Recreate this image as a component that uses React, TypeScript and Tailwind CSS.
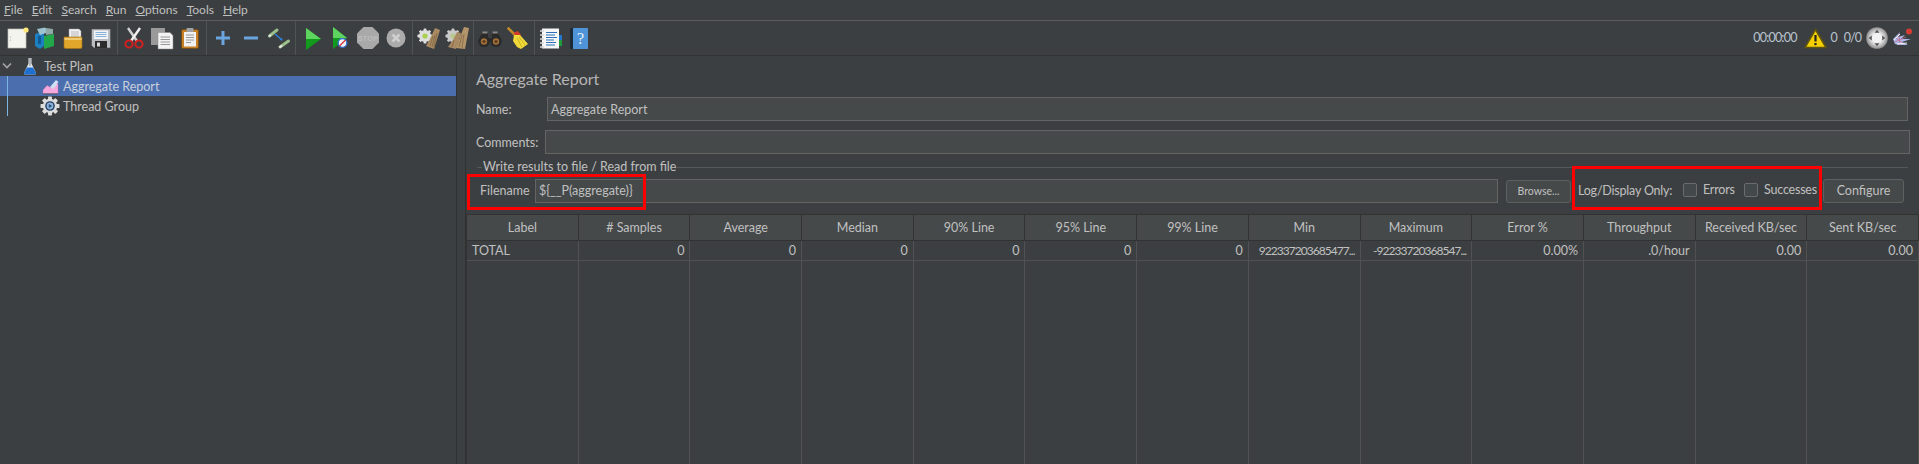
import React from "react";

function Sep() {
  return <div className="w-px h-[34px] bg-[#505354] mx-[2px] self-center shrink-0" />;
}

function Btn({ children }: { children: React.ReactNode }) {
  return <div className="w-[28px] h-[34px] shrink-0 flex items-center justify-center">{children}</div>;
}

const I = ({ children, w = 24, h = 24 }: { children: React.ReactNode; w?: number; h?: number }) => (
  <svg width={w} height={h} viewBox={`0 0 ${w} ${h}`} className="block">{children}</svg>
);

const NewDoc = () => (
  <I>
    <rect x="3" y="3" width="18" height="19" fill="#f4f4ee" stroke="#bdbdb5" strokeWidth="0.7" />
    <circle cx="21" cy="4" r="2.6" fill="#ffe97a" />
    <circle cx="5.5" cy="11" r="0.6" fill="#999" />
    <circle cx="5.5" cy="14" r="0.6" fill="#999" />
  </I>
);
const Template = () => (
  <I>
    <path d="M2 8 L11 5 V20 L7 23 L2 20Z" fill="#1c7fc0" />
    <path d="M11 10 L21 8 V20 L11 23Z" fill="#22a84a" />
    <path d="M4 3 L12 1.5 L16 6 L7 9Z" fill="#9cc3cf" />
    <path d="M13 2 L20 3 L20 8 L13 9Z" fill="#8fa9a6" />
    <rect x="5" y="10" width="3" height="8" fill="#0f5a94" />
  </I>
);
const OpenIcon = () => (
  <I>
    <path d="M8 3 H18 L20 5 V14 H8Z" fill="#f2f2f2" stroke="#999" strokeWidth="0.5" />
    <path d="M10 6 H18 M10 8 H18 M10 10 H18" stroke="#aaa" strokeWidth="0.8" />
    <path d="M3 11 H21 V21 Q21 22.5 19 22.5 H5 Q3 22.5 3 21Z" fill="#e0a52b" stroke="#a67414" strokeWidth="0.6" />
    <path d="M3.5 13 H20.5" stroke="#f6d98a" strokeWidth="1.5" />
  </I>
);
const Save = () => (
  <I>
    <path d="M2.5 3 H21.5 V22 H5 L2.5 19.5Z" fill="#b9bcc1" stroke="#4c4c4c" strokeWidth="0.6" />
    <rect x="5" y="4.5" width="14" height="8.5" fill="#f2f5f8" />
    <path d="M6.5 6.5 H17.5 M6.5 8.5 H17.5 M6.5 10.5 H17.5" stroke="#6f9fce" strokeWidth="0.8" />
    <rect x="6" y="15" width="12" height="7" fill="#2b2b2b" />
    <rect x="8" y="16.5" width="3" height="4" fill="#d8d8d8" />
  </I>
);
const Cut = () => (
  <I>
    <path d="M6 2 L15 15" stroke="#d3d3d3" strokeWidth="2.4" />
    <path d="M18 2 L9 15" stroke="#f0f0f0" strokeWidth="2.4" />
    <circle cx="7" cy="18" r="3.6" fill="none" stroke="#d21f1f" strokeWidth="2" />
    <circle cx="17" cy="18" r="3.6" fill="none" stroke="#d21f1f" strokeWidth="2" />
  </I>
);
const Copy = () => (
  <I>
    <rect x="1" y="2" width="14" height="17" fill="#9a9a9a" />
    <path d="M8 6.5 H20 L23 9.5 V23 H8Z" fill="#f3f3f3" stroke="#8a8a8a" strokeWidth="0.5" />
    <path d="M10.5 11 H20 M10.5 13.5 H20 M10.5 16 H20 M10.5 18.5 H20" stroke="#8d8d8d" strokeWidth="0.9" />
  </I>
);
const Paste = () => (
  <I>
    <rect x="3.5" y="3.5" width="17" height="19" rx="1.5" fill="#c57f24" stroke="#6d4611" strokeWidth="0.7" />
    <rect x="6" y="6" width="12" height="14.5" fill="#f1f1f1" />
    <rect x="8.5" y="2" width="7" height="4" rx="0.8" fill="#9ea3a8" />
    <path d="M8 9 H16 M8 11.5 H16 M8 14 H16 M8 16.5 H13" stroke="#8f8f8f" strokeWidth="0.9" />
  </I>
);
const Plus = () => (
  <I>
    <path d="M12 5 V19 M5 12 H19" stroke="#6ba5e0" strokeWidth="3" />
  </I>
);
const Minus = () => (
  <I>
    <path d="M5 12 H19" stroke="#6ba5e0" strokeWidth="3" />
  </I>
);
const Toggle = () => (
  <I>
    <path d="M2.5 10 L10 4" stroke="#9abf8b" strokeWidth="3" strokeLinecap="round" />
    <path d="M13 21 L21.5 15" stroke="#9abf8b" strokeWidth="3" strokeLinecap="round" />
    <path d="M2 10.5 L4 9" stroke="#e8e8e8" strokeWidth="2" />
    <path d="M12.5 21.5 L15 19.5" stroke="#e8e8e8" strokeWidth="2" />
    <path d="M8 8 L15 14" stroke="#2f7fd8" strokeWidth="1.4" />
    <path d="M15.5 14.5 L12.5 14 L15 11.5Z" fill="#2f7fd8" />
  </I>
);
const Play = () => (
  <I>
    <path d="M6 2 L21 13 L6 24Z" fill="#119a1c" />
    <path d="M6 2 L21 13 L6 13Z" fill="#5fd35f" />
  </I>
);
const PlayNoTimer = () => (
  <I>
    <path d="M5 1 L19 12 L5 23Z" fill="#119a1c" />
    <path d="M5 1 L19 12 L5 12Z" fill="#5fd35f" />
    <circle cx="14.5" cy="17" r="4.4" fill="#f2f6ff" stroke="#2d6fd0" strokeWidth="1.4" />
    <path d="M11.5 20 L17.5 14" stroke="#d93a3a" strokeWidth="1.4" />
  </I>
);
const Stop = () => (
  <svg width="24" height="24" viewBox="0 0 24 24" className="block">
    <path d="M7.5 1 H16.5 L23 7.5 V16.5 L16.5 23 H7.5 L1 16.5 V7.5Z" fill="#a9a9a9" />
    <text x="12" y="14.5" textAnchor="middle" fontSize="7.5" fontWeight="700" fill="#bdbdbd" fontFamily="'Liberation Sans', sans-serif">STOP</text>
  </svg>
);
const Shutdown = () => (
  <I>
    <circle cx="12" cy="12" r="9.5" fill="#ababab" />
    <path d="M8.5 8.5 L15.5 15.5 M15.5 8.5 L8.5 15.5" stroke="#cfcfcf" strokeWidth="2.6" />
  </I>
);
const GearSmall = ({ fill = "#dedede", dot = "#a8cf4f" }: { fill?: string; dot?: string }) => (
  <g>
    <g fill={fill}>
      <circle cx="8" cy="10" r="6" />
      <rect x="6.6" y="2.5" width="2.8" height="15" rx="0.6" />
      <rect x="6.6" y="2.5" width="2.8" height="15" rx="0.6" transform="rotate(45 8 10)" />
      <rect x="6.6" y="2.5" width="2.8" height="15" rx="0.6" transform="rotate(90 8 10)" />
      <rect x="6.6" y="2.5" width="2.8" height="15" rx="0.6" transform="rotate(135 8 10)" />
    </g>
    <circle cx="8" cy="10" r="2.6" fill={dot} />
  </g>
);
const Clear = () => (
  <I>
    <GearSmall />
    <path d="M18 2 L23 4 L17 23 L9 20 L13 13Z" fill="#a98a62" />
    <path d="M16 10 L13 20 M18 9 L15 21 M20 7 L17 21" stroke="#79603f" strokeWidth="0.7" />
  </I>
);
const ClearAll = () => (
  <I>
    <GearSmall fill="#c9c9c9" dot="#b8c98c" />
    <path d="M12 6 L16 7 L11 23 L3 21 L8 14Z" fill="#a98a62" />
    <path d="M19 1 L24 2 L20 23 L11 22 L15 11Z" fill="#b39569" />
    <path d="M17 9 L14 21 M19 8 L17 22 M9 14 L7 21" stroke="#79603f" strokeWidth="0.7" />
  </I>
);
const Binoculars = () => (
  <I>
    <path d="M3 9 L6 6 H10 V12 H14 V6 H18 L21 9 L24 16 H0Z" fill="#2c2a28" />
    <circle cx="6" cy="15.5" r="5.6" fill="#2a2a2a" />
    <circle cx="18" cy="15.5" r="5.6" fill="#2a2a2a" />
    <circle cx="6" cy="15.5" r="3.2" fill="#a3703a" />
    <circle cx="18" cy="15.5" r="3.2" fill="#a3703a" />
    <circle cx="6" cy="15.5" r="1.6" fill="#5b3c1e" />
    <circle cx="18" cy="15.5" r="1.6" fill="#5b3c1e" />
    <rect x="4.5" y="5.5" width="5" height="2" fill="#8a8a8a" />
    <rect x="14.5" y="5.5" width="5" height="2" fill="#8a8a8a" />
  </I>
);
const Broom = () => (
  <I>
    <path d="M2.5 2.5 L9 9" stroke="#c08a2c" strokeWidth="2.6" strokeLinecap="round" />
    <path d="M7 7 L12 5 L15 9 L13 12Z" fill="#d43a2a" />
    <path d="M8 9 L14 9 L22 18 L15 23 L11 21 L7 15Z" fill="#f0d93a" />
    <path d="M11 12 L16 21 M13 11 L19 19" stroke="#c2a81c" strokeWidth="0.8" />
  </I>
);
const ListIcon = () => (
  <I>
    <rect x="3" y="2.5" width="17" height="20" fill="#f6f6f6" />
    <path d="M7 6.5 H18 M7 9 H16 M7 11.5 H18 M7 14 H15 M7 16.5 H17 M7 19 H16" stroke="#2c6fb8" strokeWidth="1" />
    <path d="M1 5 H5 M1 9 H5 M1 13 H5 M1 17 H5 M1 21 H5" stroke="#d8d8d8" strokeWidth="1.4" />
    <rect x="20" y="9" width="3" height="5" fill="#2277cc" />
    <rect x="20" y="14" width="3" height="6" fill="#1f9a3c" />
  </I>
);
const HelpIcon = () => (
  <svg width="24" height="24" viewBox="0 0 24 24" className="block">
    <rect x="3" y="2" width="18" height="21" rx="1.5" fill="#1d2a38" />
    <rect x="6" y="2" width="15" height="21" rx="0.5" fill="#4f93d8" />
    <text x="13.5" y="18" textAnchor="middle" fontSize="16" fill="#e8f2fb" fontFamily="'Liberation Serif', serif">?</text>
  </svg>
);
const Warn = () => (
  <svg width="23" height="21" viewBox="0 0 23 21" className="block">
    <path d="M11.5 1.5 L22 19.5 H1Z" fill="#f5d000" stroke="#5e5310" strokeWidth="1.6" strokeLinejoin="round" />
    <path d="M11.5 7 V13.5" stroke="#222" strokeWidth="2.2" />
    <rect x="10.4" y="15" width="2.2" height="2.2" fill="#222" />
  </svg>
);
const Round = () => (
  <svg width="22" height="22" viewBox="0 0 22 22" className="block">
    <defs>
      <radialGradient id="rg">
        <stop offset="0.55" stopColor="#e2e2e2" />
        <stop offset="1" stopColor="#8d8d8d" />
      </radialGradient>
    </defs>
    <circle cx="11" cy="11" r="10.8" fill="url(#rg)" />
    <circle cx="11" cy="11" r="5" fill="#f3f3f3" />
    <path d="M11 2.8 L13.4 5.8 H8.6Z M11 19.2 L13.4 16.2 H8.6Z M2.8 11 L5.8 8.6 V13.4Z M19.2 11 L16.2 8.6 V13.4Z" fill="#555" />
  </svg>
);
const Jm = () => (
  <svg width="21" height="20" viewBox="0 0 21 20" className="block">
    <path d="M1 11 L8 4 L6 9 L13 7 L9 11 L19 11 L10 14 L16 17 L7 17 L3 16Z" fill="#aab9e8" />
    <path d="M4 10 L12 16 M7 7 L8 17 M3 14 L14 9" stroke="#c86a8a" strokeWidth="0.8" />
    <path d="M2 12 L8 6 M5 16 L15 15" stroke="#f4f6ff" strokeWidth="1" />
    <circle cx="17" cy="3.5" r="3" fill="#d63c32" />
  </svg>
);

const Flask = () => (
  <svg width="14" height="18" viewBox="0 0 14 18" className="block">
    <path d="M5.5 1 H8.5 V6.5 L13 16 Q13.2 17.5 12 17.5 H2 Q0.8 17.5 1 16 L5.5 6.5Z" fill="#e4e7ea" />
    <path d="M4 10.5 H10 L13 16 Q13.2 17.5 12 17.5 H2 Q0.8 17.5 1 16Z" fill="#1f6fd0" />
    <path d="M7 1 V9" stroke="#7f8a94" strokeWidth="1" />
  </svg>
);
const ReportIcon = () => (
  <svg width="17" height="18" viewBox="0 0 17 18" className="block">
    <path d="M1 16.5 V13 L5 8.5 L9 10.5 L12 7 H16 V16.5Z" fill="#f4a8dc" stroke="#d36db8" strokeWidth="0.4" />
    <path d="M8 10 L14 3 L16.5 5 L11.5 12Z" fill="#cfe0f3" />
    <path d="M1 17 H16" stroke="#55585a" strokeWidth="1" />
  </svg>
);
const Gear = () => (
  <svg width="20" height="20" viewBox="0 0 20 20" className="block">
    <g fill="#dcdcdc">
      <circle cx="10" cy="10" r="7.2" />
      <rect x="8" y="0.5" width="4" height="19" rx="0.8" />
      <rect x="8" y="0.5" width="4" height="19" rx="0.8" transform="rotate(45 10 10)" />
      <rect x="8" y="0.5" width="4" height="19" rx="0.8" transform="rotate(90 10 10)" />
      <rect x="8" y="0.5" width="4" height="19" rx="0.8" transform="rotate(135 10 10)" />
    </g>
    <circle cx="10" cy="10" r="4.8" fill="#1f3f66" />
    <circle cx="10" cy="10" r="3.4" fill="#8fb2d8" />
    <path d="M8.8 8 L12.2 10 L8.8 12Z" fill="#24507f" />
  </svg>
);

const cols = [
  "Label", "# Samples", "Average", "Median", "90% Line", "95% Line", "99% Line", "Min", "Maximum", "Error %", "Throughput", "Received KB/sec", "Sent KB/sec",
];
const totals = [
  "TOTAL", "0", "0", "0", "0", "0", "0", "922337203685477...", "-92233720368547...", "0.00%", ".0/hour", "0.00", "0.00",
];

function Check({ label, w }: { label: string; w: string }) {
  return (
    <div className={`flex items-center gap-[6px] -mt-[3px] ${w}`}>
      <div className="w-[14px] h-[14px] rounded-[2px] border border-[#6b6b6b] bg-[#43494a] shrink-0" />
      <span className="tracking-[-0.2px]">{label}</span>
    </div>
  );
}

export default function App() {
  return (
    <div
      className="relative w-[1919px] h-[464px] overflow-hidden bg-[#3c3f41] text-[#c0c0c0] text-[12.5px] leading-[16px] flex flex-col"
      style={{ fontFamily: "Lato, sans-serif" }}
    >
      {/* Menu */}
      <div className="h-[20px] flex items-center pl-[4px] gap-[9px] border-b border-[#5b5b5b] box-content shrink-0 text-[12px]">
        {["File", "Edit", "Search", "Run", "Options", "Tools", "Help"].map((m) => (
          <span key={m}>
            <span className="underline">{m[0]}</span>
            {m.slice(1)}
          </span>
        ))}
      </div>
      {/* Toolbar */}
      <div className="h-[34px] flex items-center pl-[3px] shrink-0 border-b border-[#323232] box-content">
        <Btn><NewDoc /></Btn><Btn><Template /></Btn><Btn><OpenIcon /></Btn><Btn><Save /></Btn>
        <Sep />
        <Btn><Cut /></Btn><Btn><Copy /></Btn><Btn><Paste /></Btn>
        <Sep />
        <Btn><Plus /></Btn><Btn><Minus /></Btn><Btn><Toggle /></Btn>
        <Sep />
        <Btn><Play /></Btn><Btn><PlayNoTimer /></Btn><Btn><Stop /></Btn><Btn><Shutdown /></Btn>
        <Sep />
        <Btn><Clear /></Btn><Btn><ClearAll /></Btn>
        <Sep />
        <Btn><Binoculars /></Btn><Btn><Broom /></Btn>
        <Sep />
        <Btn><ListIcon /></Btn><Btn><HelpIcon /></Btn>
        <div className="ml-auto flex items-center pr-[6px] text-[#b9c4d0]">
          <span className="tracking-[-0.8px]">00:00:00</span>
          <span className="ml-[7px]"><Warn /></span>
          <span className="ml-[4px]">0</span>
          <span className="ml-[6px] tracking-[-1px]">0/0</span>
          <span className="ml-[5px]"><Round /></span>
          <span className="ml-[4px]"><Jm /></span>
        </div>
      </div>
      {/* Split */}
      <div className="flex-1 flex min-h-0">
        {/* Tree */}
        <div className="w-[456px] shrink-0 relative">
          <div className="h-[20px] flex items-center relative">
            <svg width="10" height="8" viewBox="0 0 10 8" className="ml-[2px]">
              <path d="M1 1.5 L5 5.5 L9 1.5" fill="none" stroke="#a5a5a5" strokeWidth="1.6" />
            </svg>
            <span className="ml-[11px]"><Flask /></span>
            <span className="ml-[7px] pt-[2px]">Test Plan</span>
          </div>
          <div className="h-[20px] flex items-center bg-[#4b6eaf] pl-[42px]">
            <ReportIcon />
            <span className="ml-[4px] pt-[2px] text-[#c8d0dc]">Aggregate Report</span>
          </div>
          <div className="h-[20px] flex items-center pl-[40px]">
            <Gear />
            <span className="ml-[3px] pt-[2px]">Thread Group</span>
          </div>
          <div className="absolute left-[7px] top-[20px] w-px h-[40px] bg-[#7db4e0]" />
        </div>
        <div className="w-[10px] shrink-0 border-x border-[#2f3133]" />
        {/* Right */}
        <div className="flex-1 min-w-0 flex flex-col">
          <div className="pl-[10px]">
            <div className="h-[41px] pt-[13px] text-[16px] leading-[20px] text-[#b5b5b5]">Aggregate Report</div>
            <div className="h-[24px] flex items-center pr-[11px]">
              <span className="w-[71px] shrink-0 pt-[2px]">Name:</span>
              <div className="flex-1 h-[24px] border border-[#646464] bg-[#45494a] px-[3px] pt-[2px] flex items-center">Aggregate Report</div>
            </div>
            <div className="h-[24px] mt-[9px] flex items-center pr-[9px]">
              <span className="w-[69px] shrink-0 pt-[2px]">Comments:</span>
              <div className="flex-1 h-[24px] border border-[#646464] bg-[#45494a]" />
            </div>
            <div className="h-[16px] flex items-center pl-[1px] mt-[5px] pr-[11px]">
              <div className="w-[5px] h-px bg-[#555759]" />
              <span className="px-[1px]">Write results to file / Read from file</span>
              <div className="flex-1 h-px bg-[#555759]" />
            </div>
          </div>
          <div className="h-[39px] pt-[4px] flex items-start pl-[14px] shrink-0">
            <div className="h-[24px] flex items-center">
              <span className="w-[55px] shrink-0">Filename</span>
              <div className="w-[963px] h-[24px] border border-[#646464] bg-[#45494a] px-[3px] flex items-center">{"${__P(aggregate)}"}</div>
              <div className="ml-[8px] w-[65px] h-[23px] rounded-[3px] border border-[#5e6060] bg-[#45494a] flex items-center justify-center text-[10.5px]">Browse...</div>
              <span className="ml-[7px] w-[105px] shrink-0 whitespace-nowrap tracking-[-0.2px]">Log/Display Only:</span>
              <Check label="Errors" w="w-[61px]" />
              <Check label="Successes" w="w-[79px]" />
              <div className="w-[81px] h-[24px] rounded-[3px] border border-[#5e6060] bg-[#45494a] flex items-center justify-center">Configure</div>
            </div>
          </div>
          {/* Table */}
          <div className="flex-1 relative min-h-0 grid grid-rows-[26px_20px_1fr] border-t border-l border-[#323232]" style={{ gridTemplateColumns: "repeat(13, minmax(0, 1fr))" }}>
            {cols.map((c) => (
              <div key={c} className="bg-[#45494a] flex items-center justify-center border-r border-b border-[#323232]">{c}</div>
            ))}
            {totals.map((c, i) => (
              <div key={i} className={`flex items-center border-r border-b border-[#515151] px-[5px] whitespace-nowrap overflow-hidden ${i === 0 ? "justify-start" : "justify-end"} ${c.length > 10 ? "tracking-[-0.95px] text-[12px]" : ""}`}>{c}</div>
            ))}
            {cols.map((c) => (
              <div key={c} className="border-r border-[#515151]" />
            ))}
          </div>
        </div>
      </div>
      {/* annotation rectangles */}
      <div className="absolute left-[467px] top-[174px] w-[179px] h-[36px] border-[3px] border-[#ff0000] pointer-events-none" />
      <div className="absolute left-[1572px] top-[166px] w-[250px] h-[44px] border-[3px] border-[#ff0000] pointer-events-none" />
    </div>
  );
}
